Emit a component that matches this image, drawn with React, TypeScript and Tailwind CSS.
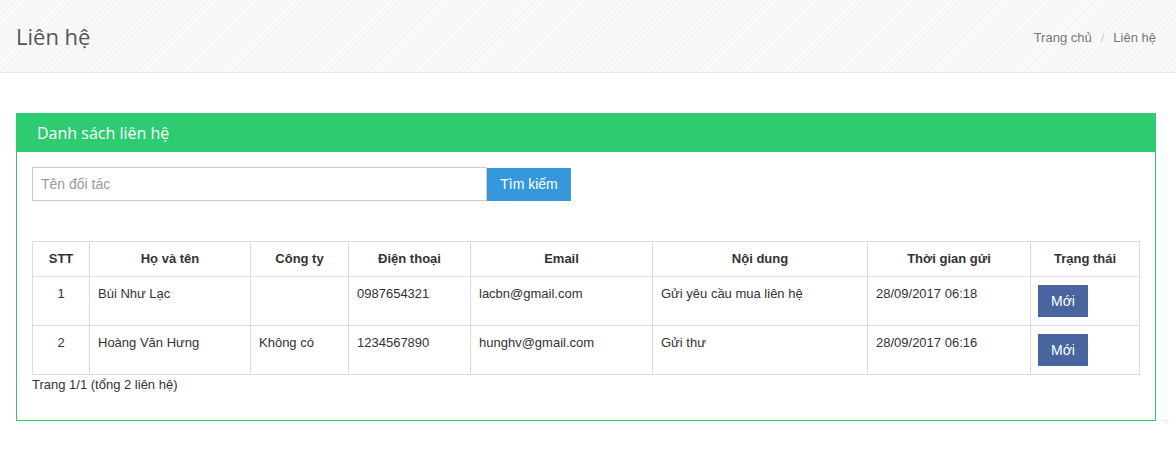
const rows = [
  { stt: 1, name: "Bùi Như Lạc", company: "", phone: "0987654321", email: "lacbn@gmail.com", content: "Gửi yêu cầu mua liên hệ", time: "28/09/2017 06:18" },
  { stt: 2, name: "Hoàng Văn Hưng", company: "Không có", phone: "1234567890", email: "hunghv@gmail.com", content: "Gửi thư", time: "28/09/2017 06:16" },
];

const headers = ["STT", "Họ và tên", "Công ty", "Điện thoại", "Email", "Nội dung", "Thời gian gửi", "Trạng thái"];
const widths = ["w-[57px]", "w-[161px]", "w-[98px]", "w-[122px]", "w-[182px]", "w-[215px]", "w-[163px]", "w-[109px]"];

const cell = "border border-[#ddd] px-2 pt-[7px] pb-[9px] align-top leading-[20px]";

const App = () => {
  return (
    <div className="min-h-[453px] bg-white font-['Liberation_Sans',Arial,sans-serif] text-[#333]">
      <div className="h-[73px] border-b border-[#e8e8e8] bg-[#f8f8f8] bg-[repeating-linear-gradient(135deg,#f9f9f9_0px,#f9f9f9_2px,#f6f6f6_3px,#f9f9f9_4px)] pl-4 pr-5 flex items-center justify-between">
        <h1 className="font-['Open_Sans',sans-serif] text-[22px] text-[#555] leading-none">Liên hệ</h1>
        <div className="flex items-center text-[13px] text-[#777] mt-[3px]">
          <span>Trang chủ</span>
          <span className="px-[9px] text-[#ccc]">/</span>
          <span>Liên hệ</span>
        </div>
      </div>

      <div className="pl-4 pr-5 pt-10">
        <div className="border border-[#2ecc71]">
          <div className="h-[38px] bg-[#2ecc71] px-5 flex items-center">
            <h2 className="font-['Open_Sans',sans-serif] text-[16px] text-white -mt-[1px]">Danh sách liên hệ</h2>
          </div>
          <div className="px-[15px] pt-[15px] pb-[15px]">
            <div className="flex">
              <input
                className="w-[455px] h-[34px] border border-[#ccc] px-2 text-[14px] outline-none placeholder:text-[#999]"
                placeholder="Tên đối tác"
              />
              <button className="h-[33px] mt-[1px] w-[84px] bg-[#3498db] text-white text-[14px]">Tìm kiếm</button>
            </div>

            <table className="mt-10 w-[1107px] table-fixed border-collapse text-[13px]">
              <thead>
                <tr>
                  {headers.map((h, i) => (
                    <th key={h} className={`${widths[i]} border border-[#ddd] py-2 px-2 leading-[18px] font-bold text-center`}>
                      {h}
                    </th>
                  ))}
                </tr>
              </thead>
              <tbody>
                {rows.map((r) => (
                  <tr key={r.stt}>
                    <td className={`${cell} text-center`}>{r.stt}</td>
                    <td className={cell}>{r.name}</td>
                    <td className={cell}>{r.company}</td>
                    <td className={cell}>{r.phone}</td>
                    <td className={cell}>{r.email}</td>
                    <td className={cell}>{r.content}</td>
                    <td className={cell}>{r.time}</td>
                    <td className="border border-[#ddd] px-2 py-2 align-top">
                      <span className="flex w-[50px] h-[32px] -ml-[1px] items-center justify-center bg-[#4865a0] text-white text-[14px]">Mới</span>
                    </td>
                  </tr>
                ))}
              </tbody>
            </table>
            <p className="text-[13px] leading-[20px] mb-[10px]">Trang 1/1 (tổng 2 liên hệ)</p>
          </div>
        </div>
      </div>
    </div>
  );
};

export default App;
